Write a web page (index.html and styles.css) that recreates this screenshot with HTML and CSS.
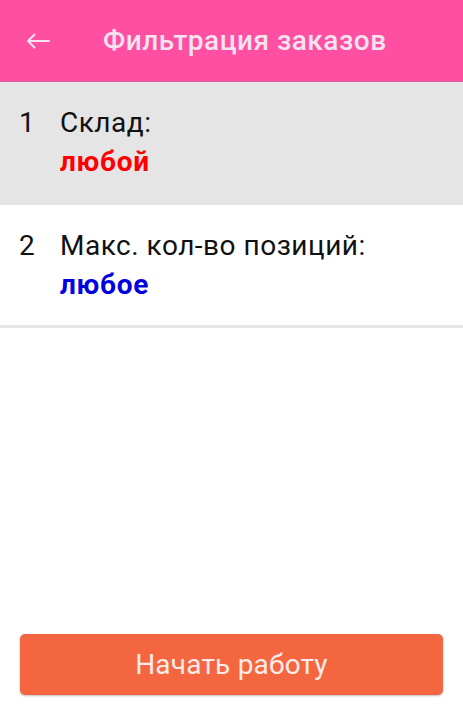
FILE: index.html
```html
<!DOCTYPE html>
<html lang="ru">
<head>
<meta charset="utf-8">
<link rel="stylesheet" href="styles.css">
</head>
<body>
<div class="screen">
  <header class="appbar">
    <span class="back">
      <svg width="24" height="16" viewBox="0 0 24 16"><path d="M23 8H2M8.5 1.5L2 8l6.5 6.5" fill="none" stroke="#f6e3ee" stroke-width="2" stroke-linecap="round" stroke-linejoin="round"/></svg>
    </span>
    <h1 class="title">Фильтрация заказов</h1>
  </header>
  <ul class="list">
    <li class="item selected">
      <span class="num">1</span>
      <div class="body">
        <div class="label">Склад:</div>
        <div class="value red">любой</div>
      </div>
    </li>
    <li class="item">
      <span class="num">2</span>
      <div class="body">
        <div class="label">Макс. кол-во позиций:</div>
        <div class="value blue">любое</div>
      </div>
    </li>
  </ul>
  <div class="spacer"></div>
  <div class="footer">
    <button class="start">Начать работу</button>
  </div>
</div>
</body>
</html>
```
FILE: styles.css
```css
html, body {
  margin: 0;
  padding: 0;
  background: #ffffff;
  font-family: Roboto, "Noto Sans", sans-serif;
}
.screen {
  width: 463px;
  height: 720px;
  display: flex;
  flex-direction: column;
}
.appbar {
  height: 81px;
  background: #ff4fa3;
  display: flex;
  align-items: center;
  border-bottom: 1px solid #d35ea0;
}
.back {
  width: 24px;
  height: 16px;
  margin-left: 26px;
  display: flex;
}
.title {
  margin: 0 0 0 53px;
  font-size: 28px;
  font-weight: 500;
  color: #f6e3ee;
  letter-spacing: 0.5px;
}
.list {
  list-style: none;
  margin: 0;
  padding: 0;
}
.item {
  display: flex;
  height: 123px;
  box-sizing: border-box;
  padding-top: 21px;
  border-bottom: 3px solid #e6e6e6;
  background: #ffffff;
}
.item.selected {
  background: #e5e5e5;
  border-bottom: none;
}
.num {
  width: 41px;
  padding-left: 19px;
  font-size: 28px;
  color: #111111;
  line-height: 39px;
}
.label {
  font-size: 28px;
  color: #111111;
  line-height: 39px;
  letter-spacing: 0.5px;
}
.value {
  font-size: 28px;
  font-weight: 700;
  line-height: 39px;
  letter-spacing: 0.7px;
}
.red { color: #ff0000; }
.blue { color: #0000e0; }
.spacer { flex: 1; }
.footer {
  padding: 0 20px 25px 20px;
}
.start {
  width: 100%;
  height: 61px;
  border: none;
  border-radius: 5px;
  background: #f4663f;
  color: #fbecea;
  font-family: Roboto, "Noto Sans", sans-serif;
  font-size: 28px;
  letter-spacing: 0.2px;
  box-shadow: 0 1px 2px rgba(0,0,0,0.25);
}
```
